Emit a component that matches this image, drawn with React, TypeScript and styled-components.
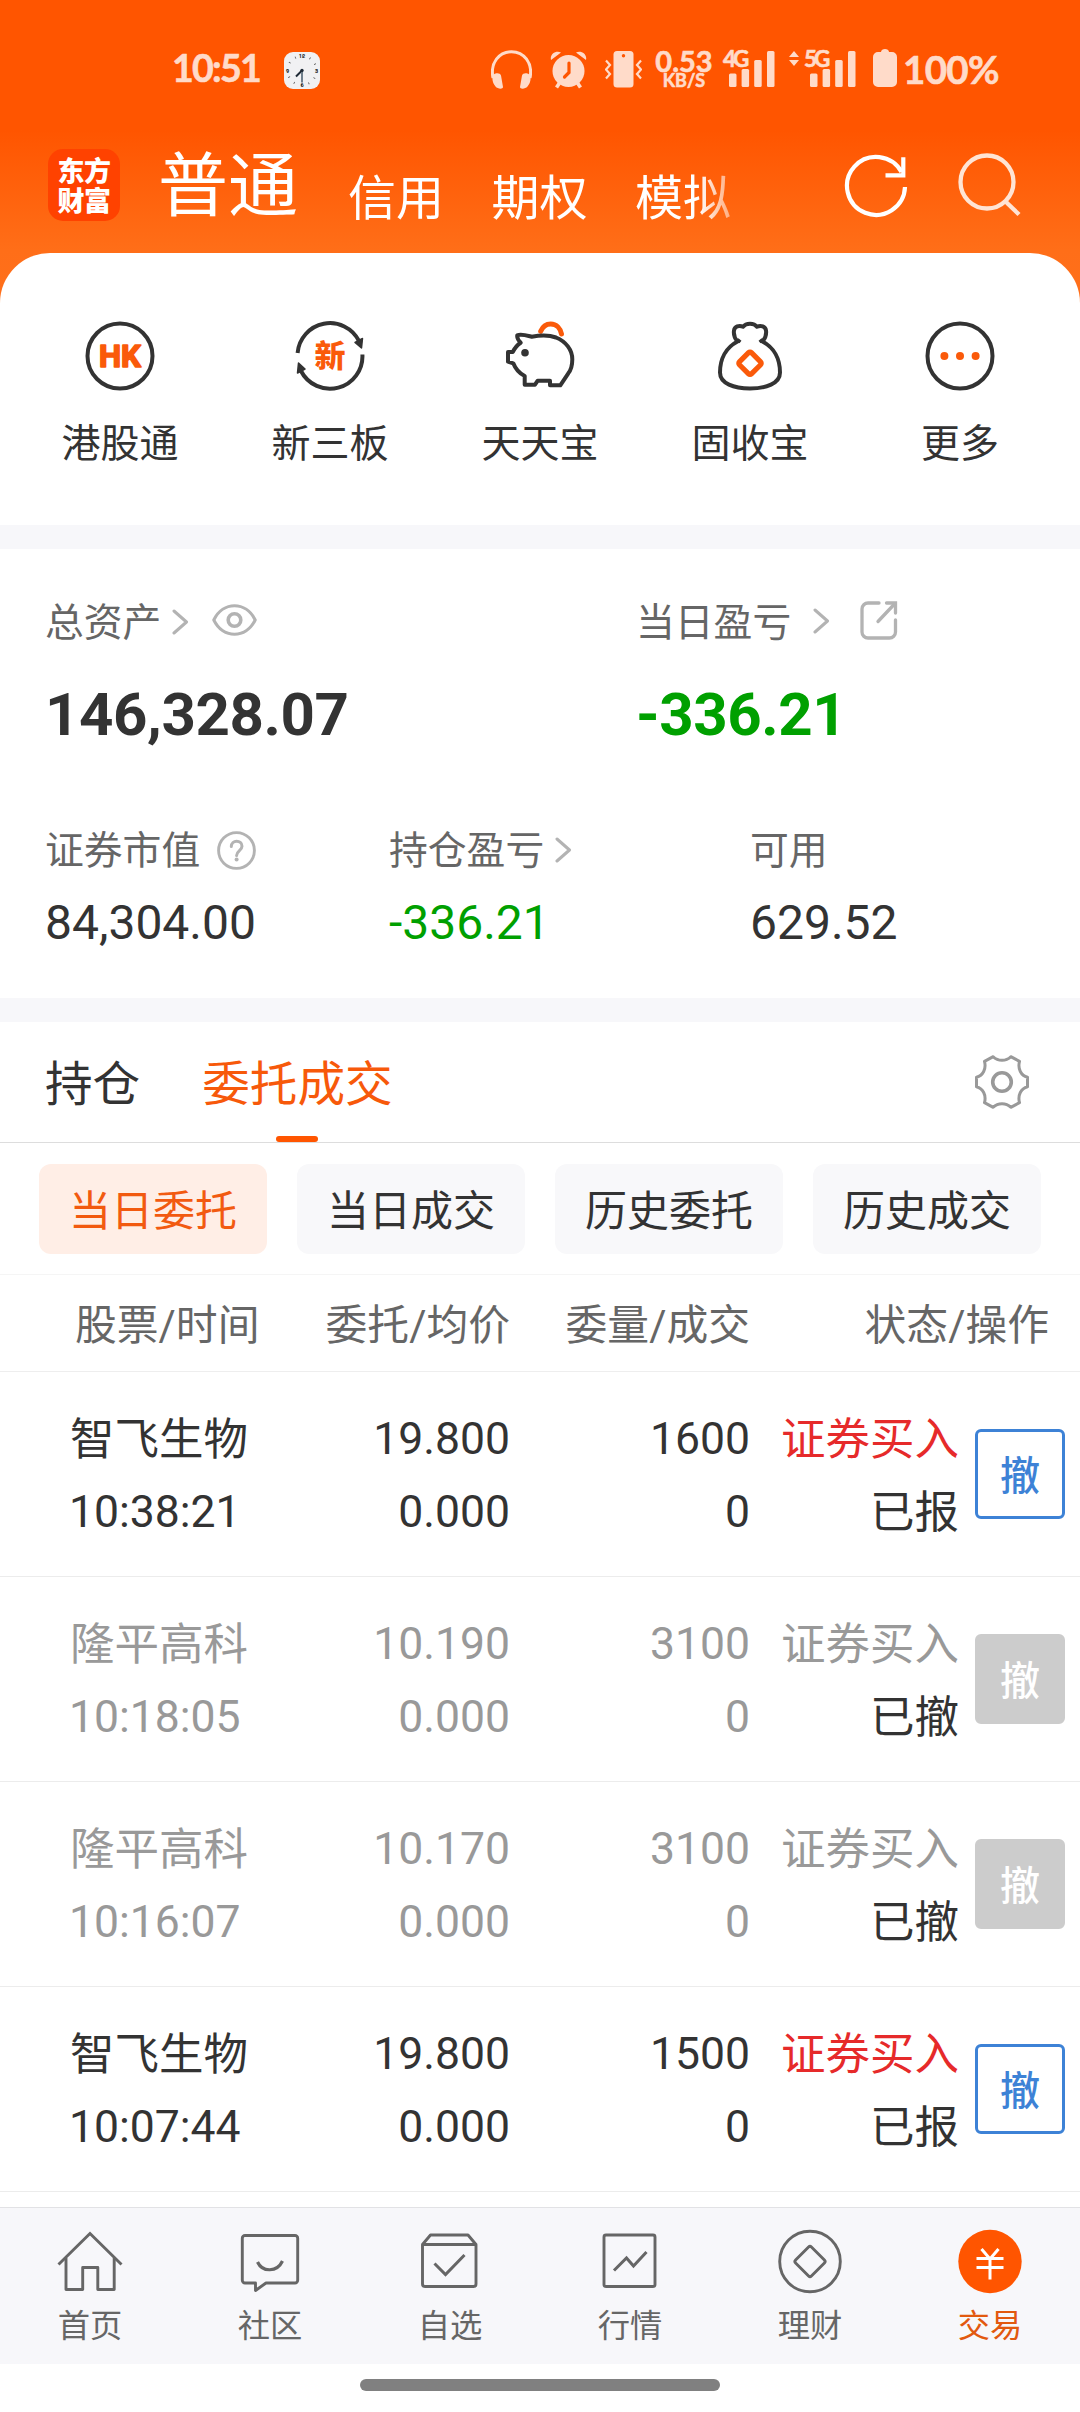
import React from 'react';
import styled, { createGlobalStyle, css } from 'styled-components';

const GlobalStyle = createGlobalStyle`
  *, *::before, *::after { box-sizing: border-box; }
  html, body { margin: 0; padding: 0; background: #fff; }
  body {
    width: 1080px;
    font-family: Roboto, 'Noto Sans CJK SC', sans-serif;
    color: #333;
    -webkit-font-smoothing: antialiased;
  }
  svg { display: block; flex: none; }
`;

const brand = '#ff5500';
const ink = '#333333';
const sub = '#666666';
const mute = '#999999';
const line = '#b3b3b3';
const green = '#00a000';
const strip = '#f7f7fa';
const status = '#ffdbc9';

const Screen = styled.div`
  width: 1080px;
  height: 2412px;
  overflow: hidden;
  display: flex;
  flex-direction: column;
  background: linear-gradient(#ff5500 0, #ff5500 130px, #ff6e18 250px, #ff701c 320px);
`;

/* ---------- status bar ---------- */

const StatusBar = styled.header`
  height: 136px;
  flex: none;
  display: flex;
  align-items: flex-start;
  padding: 48px 78px 0 172px;
  color: ${status};
  font-family: Lato, Roboto, sans-serif;
  font-weight: 700;
  -webkit-text-stroke: 0.6px ${status};
`;

const Clock = styled.span`
  width: 112px;
  font-size: 37.5px;
  line-height: 39px;
  letter-spacing: -1.7px;
  white-space: nowrap;
`;

const StatusIcons = styled.div`
  display: flex;
  align-items: flex-start;
  margin-left: auto;
`;

const Speed = styled.div`
  width: 60px;
  margin: 1px 9px 0 12px;
  display: flex;
  flex-direction: column;
  align-items: center;
  white-space: nowrap;
  b { font-size: 29px; font-weight: 700; line-height: 23px; }
  small { font-size: 18px; line-height: 17px; }
`;

const Signal = styled.div<{ $gap: number }>`
  display: flex;
  align-items: flex-start;
  margin-right: ${p => p.$gap}px;
`;

const Network = styled.span`
  width: 6px;
  overflow: visible;
  white-space: nowrap;
  font-size: 22.5px;
  line-height: 21px;
  letter-spacing: -3px;
`;

const Percent = styled.span`
  width: 99px;
  margin-left: 6px;
  font-size: 38.5px;
  line-height: 42px;
  letter-spacing: -0.7px;
  white-space: nowrap;
`;

/* ---------- title bar ---------- */

const TitleBar = styled.nav`
  height: 117px;
  flex: none;
  display: flex;
  align-items: flex-start;
  padding: 0 59px 0 48px;
  color: #fff;
`;

const Logo = styled.div`
  width: 72px;
  height: 72px;
  margin-top: 13px;
  border-radius: 15px;
  background: #ff4200;
  display: flex;
  flex-direction: column;
  align-items: center;
  justify-content: center;
  font-family: 'Noto Sans CJK SC', sans-serif;
  font-size: 27px;
  font-weight: 900;
  line-height: 30px;
  letter-spacing: -0.5px;
`;

const Accounts = styled.div`
  width: 615px;
  height: 117px;
  margin-left: 38px;
  display: flex;
  align-items: flex-start;
  white-space: nowrap;
  mask-image: linear-gradient(90deg, #000 540px, transparent 600px);
`;

const Account = styled.span<{ $active?: boolean }>`
  width: 96px;
  margin-right: 47.5px;
  font-size: 48px;
  line-height: 125px;
  ${p => p.$active && css`
    width: 140px;
    margin-right: 50px;
    font-size: 70px;
    line-height: 103px;
  `}
`;

const TitleActions = styled.div`
  margin-left: auto;
  margin-top: 16px;
  display: flex;
  gap: 49px;
`;

/* ---------- sheet ---------- */

const Sheet = styled.main`
  flex: 1;
  display: flex;
  flex-direction: column;
  background: #fff;
  border-radius: 50px 50px 0 0;
`;

const Shortcuts = styled.section`
  height: 272px;
  flex: none;
  display: grid;
  grid-template-columns: repeat(5, 210px);
  padding: 67px 15px 0;
`;

const Shortcut = styled.div`
  display: flex;
  flex-direction: column;
  align-items: center;
  font-size: 39px;
  line-height: 60px;
  gap: 22px;
`;

const Strip = styled.div`
  height: 24px;
  flex: none;
  background: ${strip};
`;

const Assets = styled.section`
  height: 449px;
  flex: none;
  padding: 49px 45px 0;
`;

const AssetRow = styled.div<{ $cols: string; $top?: number }>`
  display: grid;
  grid-template-columns: ${p => p.$cols};
  margin-top: ${p => p.$top ?? 0}px;
`;

const AssetLabel = styled.div`
  height: 48px;
  display: flex;
  align-items: center;
  color: ${sub};
  font-size: 38.8px;
  line-height: 48px;
  white-space: nowrap;
`;

const LabelText = styled.span`
  padding-top: 2px;
`;

const AssetIcon = styled.span<{ $left: number; $top?: number }>`
  margin-left: ${p => p.$left}px;
  margin-top: ${p => p.$top ?? 0}px;
`;

const AssetValue = styled.div<{ $big?: boolean; $loss?: boolean }>`
  color: ${p => (p.$loss ? green : ink)};
  font-size: 48px;
  line-height: 56px;
  margin-top: 21px;
  ${p => p.$big && css`
    font-size: 60px;
    font-weight: 700;
    line-height: 70px;
    margin-top: 34px;
    letter-spacing: -0.4px;
  `}
`;

/* ---------- orders ---------- */

const Tabs = styled.div`
  height: 121px;
  flex: none;
  display: flex;
  padding: 0 51px 0 45px;
  border-bottom: 1px solid #dddddd;
`;

const Tab = styled.div<{ $active?: boolean }>`
  margin-right: 62px;
  display: flex;
  flex-direction: column;
  align-items: center;
  font-size: 47.6px;
  line-height: 126px;
  height: 120px;
  color: ${p => (p.$active ? '#f7590a' : ink)};
  ${p => p.$active && css`
    &::after {
      content: '';
      width: 42px;
      height: 6px;
      margin-top: -12px;
      border-radius: 3px;
      background: ${brand};
    }
  `}
`;

const Settings = styled.span`
  margin: 33px 0 0 auto;
`;

const Filters = styled.div`
  height: 132px;
  flex: none;
  display: grid;
  grid-template-columns: repeat(4, 228px);
  gap: 30px;
  padding: 21px 39px 0;
  border-bottom: 1px solid #f5f5f5;
`;

const Filter = styled.button<{ $active?: boolean }>`
  height: 90px;
  border: 0;
  padding: 0 0 3px;
  border-radius: 12px;
  background: ${p => (p.$active ? '#ffeee6' : '#f8f8fa')};
  color: ${p => (p.$active ? '#f25a10' : ink)};
  font: inherit;
  font-size: 42px;
`;

const HeadRow = styled.div`
  height: 97px;
  flex: none;
  display: grid;
  grid-template-columns: 184px 251px 240px 299px;
  padding: 3px 31px 0 75px;
  border-bottom: 1px solid #eeeeee;
  color: ${sub};
  font-size: 41.8px;
  line-height: 96px;
  text-align: right;
  white-space: nowrap;
`;

const OrderRow = styled.div<{ $muted: boolean }>`
  height: 205px;
  flex: none;
  display: grid;
  grid-template-columns: 190px 251px 240px 209px 90px;
  padding: 0 15px 0 69px;
  align-items: center;
  border-bottom: 1px solid #ececec;
  color: ${p => (p.$muted ? mute : ink)};
`;

const Cell = styled.div<{ $left?: boolean }>`
  padding-top: 3px;
  display: flex;
  flex-direction: column;
  text-align: ${p => (p.$left ? 'left' : 'right')};
  font-size: 44.5px;
  line-height: 73px;
  white-space: nowrap;
`;

const StockName = styled.span`
  height: 73px;
  padding: 1px 0 0 1px;
`;

const Side = styled.span<{ $muted: boolean }>`
  height: 73px;
  padding-top: 1px;
  color: ${p => (p.$muted ? mute : '#e62a2a')};
`;

const State = styled.span`
  height: 73px;
  padding-top: 1px;
  color: ${ink};
`;

const Cancel = styled.button<{ $muted: boolean }>`
  width: 90px;
  height: 90px;
  margin-left: 16px;
  padding: 0 0 3px;
  border-radius: 6px;
  border: 3px solid ${p => (p.$muted ? '#cccccc' : '#3d82d6')};
  background: ${p => (p.$muted ? '#cccccc' : '#fff')};
  color: ${p => (p.$muted ? '#fff' : '#3d82d6')};
  font: inherit;
  font-weight: 500;
  font-size: 40px;
`;

/* ---------- bottom navigation ---------- */

const BottomNav = styled.nav`
  height: 157px;
  margin-top: 15px;
  flex: none;
  display: grid;
  grid-template-columns: repeat(6, 180px);
  border-top: 1px solid #e2e2e5;
  background: ${strip};
`;

const NavItem = styled.div<{ $active?: boolean }>`
  display: flex;
  flex-direction: column;
  align-items: center;
  padding-top: 21px;
  font-size: 32.3px;
  line-height: 40px;
  gap: 11px;
  color: ${p => (p.$active ? '#e2590f' : sub)};
`;

const HomeArea = styled.footer`
  height: 48px;
  flex: none;
  display: flex;
  justify-content: center;
  padding-top: 15px;
`;

const HomeBar = styled.div`
  width: 360px;
  height: 12px;
  border-radius: 6px;
  background: #808080;
`;

/* ---------- drawings ---------- */

const Drawing = styled.svg<{ $top?: number; $left?: number; $right?: number }>`
  margin: ${p => p.$top ?? 0}px ${p => p.$right ?? 0}px 0 ${p => p.$left ?? 0}px;
`;

const ClockFace = () => (
  <Drawing $top={4} width="36" height="37" viewBox="0 0 36 37" strokeWidth="0">
    <rect width="36" height="37" rx="9" fill="#f1f1f3" />
    <circle cx="18" cy="18.5" r="14.5" fill="none" stroke="#555" strokeWidth="2.2" strokeDasharray="0.8 6.79" />
    <g fill="#222" fontFamily="Roboto" fontSize="5.5" fontWeight="700" textAnchor="middle" style={{ WebkitTextStroke: '0' }}>
      <text x="18" y="6">12</text>
      <text x="32.5" y="20.5">3</text>
      <text x="18" y="35.3">6</text>
      <text x="3.6" y="20.5">9</text>
    </g>
    <path d="M18 18.5L12 24.5" stroke="#1f2a36" strokeWidth="2" />
    <path d="M18 18.5V30.5" stroke="#6f7f8c" strokeWidth="2" />
    <circle cx="18" cy="18.5" r="1.7" fill="#1f2a36" />
  </Drawing>
);

const Headphones = () => (
  <Drawing $top={2} width="41" height="40" viewBox="0 0 41 40">
    <path d="M2 28C-1 13 8 1.700 20.500 1.700S42 13 39 28" fill="none" stroke={status} strokeWidth="3" />
    <path d="M1.500 27c0-4 7.500-5 8.500-1.500L12 37c0 2.500-5.500 2-7.500-.5S1 31 1.500 27zM39.500 27c0-4-7.500-5-8.500-1.500L29 37c0 2.500 5.500 2 7.500-.5s3.500-5.500 3-9.500z" fill={status} />
  </Drawing>
);

const Alarm = () => (
  <Drawing $top={2} $left={18} width="37" height="40" viewBox="0 0 37 40">
    <circle cx="18.500" cy="21" r="16" fill={status} />
    <path d="M1 10C-.5 4 6 0 11 2.500zM36 10c1.500-6-5-10-10-7.500z" fill={status} />
    <path d="M9.500 33l-3 4.500M27.500 33l3 4.500" stroke={status} strokeWidth="3.600" />
    <path d="M19 13v9.500L14.500 27" fill="none" stroke={brand} strokeWidth="3.200" strokeLinecap="round" />
  </Drawing>
);

const Vibrate = () => (
  <Drawing $top={3} $left={18} width="37" height="38" viewBox="0 0 37 38">
    <rect x="8.500" y="0" width="20" height="36.500" rx="3.500" fill={status} />
    <circle cx="18.500" cy="4.800" r="1.700" fill={brand} />
    <path d="M1 9.500l4 4.500-4 4.500 4 4.500-4 4.500M36 9.500L32 14l4 4.500-4 4.500 4 4.500" fill="none" stroke={status} strokeWidth="2.200" />
  </Drawing>
);

const Bars = () => (
  <Drawing $top={3} width="46" height="37" viewBox="0 0 46 37" fill={status}>
    <rect x="0" y="22.500" width="7.500" height="13.500" rx="1.500" />
    <rect x="12.600" y="18" width="7.500" height="18" rx="1.500" />
    <rect x="25.200" y="9" width="7.500" height="27" rx="1.500" />
    <rect x="38" y="0" width="7.500" height="36" rx="1.500" />
  </Drawing>
);

const DataArrows = () => (
  <Drawing $top={3} $right={5} width="10" height="15" viewBox="0 0 10 15" fill={status}>
    <path d="M5 0l5 6H0zM5 15l5-6H0z" />
  </Drawing>
);

const Battery = () => (
  <Drawing $top={1} width="24" height="38" viewBox="0 0 24 38" fill={status}>
    <path d="M8 3c0-4 8-4 8 0h3a5 5 0 015 5v25a5 5 0 01-5 5H5a5 5 0 01-5-5V8a5 5 0 015-5z" />
  </Drawing>
);

const Refresh = () => (
  <Drawing $top={2} width="64" height="66" viewBox="0 0 64 66" fill="none" stroke="#fff" strokeWidth="4.200">
    <path d="M57.500 18A29 29 0 1 0 61 33" />
    <path d="M59.300 3.200V21.300H41.500" />
  </Drawing>
);

const Search = () => (
  <Drawing width="64" height="66" viewBox="0 0 64 66" fill="none" stroke="#ffe4d4" strokeWidth="4.300">
    <circle cx="30" cy="30" r="26.500" />
    <path d="M48.500 49.500L62 62.500" />
  </Drawing>
);

const HkIcon = () => (
  <svg width="72" height="72" viewBox="0 0 72 72" fill="none">
    <circle cx="36" cy="36" r="32.500" stroke={ink} strokeWidth="4" />
    <text x="36" y="47" fontSize="31" fontWeight="700" fill="#fa5a0a" stroke="#fa5a0a" strokeWidth="1.600" strokeLinejoin="round" textAnchor="middle" textLength="42" lengthAdjust="spacingAndGlyphs" fontFamily="Roboto">HK</text>
  </svg>
);

const NewBoardIcon = () => (
  <svg width="72" height="72" viewBox="0 0 72 72" fill="none">
    <path d="M3.600 33A32.500 32.500 0 0 1 65 21M68.400 34.500A32.500 32.500 0 0 1 7 51" stroke={ink} strokeWidth="4" />
    <path d="M61 22.500L68.500 18.500 67.500 28zM11 49L3.500 53 4.500 43z" fill={ink} stroke={ink} strokeWidth="1.500" strokeLinejoin="round" />
    <text x="36" y="47.300" fontSize="31" fontWeight="900" fill="#fa5a0a" textAnchor="middle" fontFamily="Noto Sans CJK SC">新</text>
  </svg>
);

const PiggyIcon = () => (
  <svg width="72" height="72" viewBox="0 0 72 72" fill="none">
    <path d="M36.700 11.300C38.500 7 42 4 46.700 4 52.500 4 56.500 8.500 57.500 14" stroke="#fa5a0a" strokeWidth="5" strokeLinecap="round" />
    <path d="M13.300 15.300C17 13.500 23 15.500 27.700 16.700C36 15.300 46 15.300 52 17.500C62 21.500 68.300 30 68.300 39.300C68.300 46 67 50 64.300 53.300L56.300 65.300H46V60.700H33.700L31 64.700H20.700V56C14.500 53 11.500 49 9.300 43.300L4 41.700V32H8.700C10.500 28.500 13 25 16.700 22.700C14.500 20.500 12.800 17.500 13.300 15.300Z" stroke={ink} strokeWidth="4" strokeLinejoin="round" />
    <circle cx="21" cy="32.700" r="3.800" fill={ink} />
  </svg>
);

const BagIcon = () => (
  <svg width="72" height="72" viewBox="0 0 72 72" fill="none">
    <path d="M23.500 21.500C20.500 18 19.500 14 20 10.500C20.500 6.500 25 5 29 6.700C32 2.700 40 2.700 43 6.700C47 5 51.500 6.500 52 10.500C52.500 14 51.500 18 48.500 21.500C60 27.500 66 39 66 52.500C66 63.500 52 68.500 36 68.500S6 63.500 6 52.500C6 39 12 27.500 23.500 21.500Z" stroke={ink} strokeWidth="4" strokeLinejoin="round" />
    <path d="M23.500 19.500l3 2.500M48.500 19.500l-3 2.500" stroke={ink} strokeWidth="3" />
    <rect x="27.500" y="34.800" width="17" height="17" rx="2" transform="rotate(45 36 43.300)" stroke="#fa5a0a" strokeWidth="5.200" />
  </svg>
);

const MoreIcon = () => (
  <svg width="72" height="72" viewBox="0 0 72 72" fill="none">
    <circle cx="36" cy="36" r="32.500" stroke={ink} strokeWidth="4" />
    <g fill="#fa5a0a">
      <circle cx="20.400" cy="36" r="4" />
      <circle cx="36" cy="36" r="4" />
      <circle cx="51.600" cy="36" r="4" />
    </g>
  </svg>
);

const Chevron = () => (
  <svg width="17" height="26" viewBox="0 0 17 26" fill="none" stroke={line} strokeWidth="3" strokeLinecap="round" strokeLinejoin="round">
    <path d="M2 2l12.500 11L2 24" />
  </svg>
);

const Eye = () => (
  <svg width="45" height="32" viewBox="0 0 45 32" fill="none" stroke={line} strokeWidth="3.100">
    <path d="M1.800 16C11-3 34-3 43.200 16 34 35 11 35 1.800 16z" strokeLinejoin="round" />
    <circle cx="22.500" cy="16" r="6.300" strokeWidth="3.600" />
  </svg>
);

const Share = () => (
  <svg width="38" height="39" viewBox="0 0 38 39" fill="none" stroke={line} strokeWidth="3.300">
    <path d="M19 2H8a6 6 0 00-6 6v23a6 6 0 006 6h21.500a6 6 0 006-6V19M26.500 2h9v10" strokeLinecap="round" />
    <path d="M34.500 3L18 20.500" strokeLinecap="round" />
  </svg>
);

const Help = () => (
  <svg width="39" height="39" viewBox="0 0 39 39" fill="none" stroke={line} strokeWidth="2.900">
    <circle cx="19.500" cy="19.500" r="17.900" />
    <path d="M14.300 15.500C14.300 8.500 25 8.500 25 15.200c0 4.300-5.400 4.400-5.400 9.300" strokeLinecap="round" strokeWidth="3" />
    <circle cx="19.600" cy="28.400" r="2" fill={line} stroke="none" />
  </svg>
);

const Gear = () => (
  <svg width="54" height="54" viewBox="0 0 54 54" fill="none" stroke={mute} strokeWidth="3">
    <path d="M18.200 1.700C23 6.500 31 6.500 35.800 1.700L44.500 6.300C42.500 14 46 20.500 52.500 22.300V31.700C46 33.500 42.500 40 44.500 47.700L35.800 52.300C31 47.500 23 47.500 18.200 52.300L9.500 47.700C11.500 40 8 33.500 1.500 31.700V22.300C8 20.500 11.500 14 9.500 6.300Z" strokeLinejoin="round" />
    <circle cx="27" cy="27" r="9.300" strokeWidth="3.600" />
  </svg>
);

const navStroke = { fill: 'none', stroke: sub, strokeWidth: 2.9 } as const;

const HomeIcon = () => (
  <svg width="66" height="66" viewBox="0 0 66 66" {...navStroke}>
    <path d="M1.500 35.500L33 4.500 64.500 35.500" />
    <path d="M9 29v31.500H25.700V38.500H40.800V60.500H57.200V29" strokeLinejoin="round" />
  </svg>
);

const CommunityIcon = () => (
  <svg width="66" height="66" viewBox="0 0 66 66" {...navStroke}>
    <path d="M8 6.500H58a2.700 2.700 0 012.700 2.700V51.300a2.700 2.700 0 01-2.700 2.700H29L18.500 61.500V54H8a2.700 2.700 0 01-2.700-2.700V9.200A2.700 2.700 0 018 6.500z" strokeLinejoin="round" />
    <path d="M20.500 33C25.500 43.500 40 43.500 45.500 32" strokeWidth="3.200" />
  </svg>
);

const WatchlistIcon = () => (
  <svg width="66" height="66" viewBox="0 0 66 66" {...navStroke}>
    <path d="M5.500 15.500H59V55a2.500 2.500 0 01-2.500 2.500H8A2.500 2.500 0 015.500 55zM5.500 15.500L13.500 6H51l8 9.500" strokeLinejoin="round" />
    <path d="M17.500 34.500L28.500 45.500 47.500 26" strokeWidth="3" />
  </svg>
);

const QuotesIcon = () => (
  <svg width="66" height="66" viewBox="0 0 66 66" {...navStroke}>
    <rect x="7" y="6" width="51" height="51.500" rx="2" />
    <path d="M17 41.500L29.500 29 36.500 37 49.500 23" strokeWidth="3" />
  </svg>
);

const WealthIcon = () => (
  <svg width="66" height="66" viewBox="0 0 66 66" {...navStroke}>
    <circle cx="33" cy="32.500" r="30.300" />
    <rect x="21.800" y="21.300" width="22.400" height="22.400" rx="2" transform="rotate(45 33 32.500)" />
  </svg>
);

const TradeIcon = () => (
  <svg width="66" height="66" viewBox="0 0 66 66">
    <circle cx="33" cy="32.500" r="31.700" fill={brand} />
    <path d="M24.500 20L33 30 41.500 20M19.500 29.500H46.500M19.500 38.500H46.500M33 30V50.500" fill="none" stroke="#fff" strokeWidth="3" />
  </svg>
);

/* ---------- data ---------- */

const shortcuts = [
  { label: '港股通', Icon: HkIcon },
  { label: '新三板', Icon: NewBoardIcon },
  { label: '天天宝', Icon: PiggyIcon },
  { label: '固收宝', Icon: BagIcon },
  { label: '更多', Icon: MoreIcon },
];

const orders = [
  { name: '智飞生物', time: '10:38:21', price: '19.800', qty: '1600', state: '已报', muted: false },
  { name: '隆平高科', time: '10:18:05', price: '10.190', qty: '3100', state: '已撤', muted: true },
  { name: '隆平高科', time: '10:16:07', price: '10.170', qty: '3100', state: '已撤', muted: true },
  { name: '智飞生物', time: '10:07:44', price: '19.800', qty: '1500', state: '已报', muted: false },
];

const navItems = [
  { label: '首页', Icon: HomeIcon },
  { label: '社区', Icon: CommunityIcon },
  { label: '自选', Icon: WatchlistIcon },
  { label: '行情', Icon: QuotesIcon },
  { label: '理财', Icon: WealthIcon },
  { label: '交易', Icon: TradeIcon, active: true },
];

export default function App() {
  return (
    <>
      <GlobalStyle />
      <Screen>
        <StatusBar>
          <Clock>10:51</Clock>
          <ClockFace />
          <StatusIcons>
            <Headphones />
            <Alarm />
            <Vibrate />
            <Speed>
              <b>0.53</b>
              <small>KB/S</small>
            </Speed>
            <Signal $gap={14}>
              <Network>4G</Network>
              <Bars />
            </Signal>
            <Signal $gap={17}>
              <DataArrows />
              <Network>5G</Network>
              <Bars />
            </Signal>
            <Battery />
            <Percent>100%</Percent>
          </StatusIcons>
        </StatusBar>

        <TitleBar>
          <Logo>
            <span>东方</span>
            <span>财富</span>
          </Logo>
          <Accounts>
            <Account $active>普通</Account>
            <Account>信用</Account>
            <Account>期权</Account>
            <Account>模拟</Account>
          </Accounts>
          <TitleActions>
            <Refresh />
            <Search />
          </TitleActions>
        </TitleBar>

        <Sheet>
          <Shortcuts>
            {shortcuts.map(({ label, Icon }) => (
              <Shortcut key={label}>
                <Icon />
                <span>{label}</span>
              </Shortcut>
            ))}
          </Shortcuts>
          <Strip />
          <Assets>
            <AssetRow $cols="591px 1fr">
              <div>
                <AssetLabel>
                  <LabelText>总资产</LabelText>
                  <AssetIcon $left={11}><Chevron /></AssetIcon>
                  <AssetIcon $left={23} $top={-5}><Eye /></AssetIcon>
                </AssetLabel>
                <AssetValue $big>146,328.07</AssetValue>
              </div>
              <div>
                <AssetLabel>
                  <LabelText>当日盈亏</LabelText>
                  <AssetIcon $left={22} $top={-3}><Chevron /></AssetIcon>
                  <AssetIcon $left={30} $top={-3}><Share /></AssetIcon>
                </AssetLabel>
                <AssetValue $big $loss>-336.21</AssetValue>
              </div>
            </AssetRow>
            <AssetRow $cols="344px 361px 1fr" $top={76}>
              <div>
                <AssetLabel>
                  <LabelText>证券市值</LabelText>
                  <AssetIcon $left={17}><Help /></AssetIcon>
                </AssetLabel>
                <AssetValue>84,304.00</AssetValue>
              </div>
              <div>
                <AssetLabel>
                  <LabelText>持仓盈亏</LabelText>
                  <AssetIcon $left={11}><Chevron /></AssetIcon>
                </AssetLabel>
                <AssetValue $loss>-336.21</AssetValue>
              </div>
              <div>
                <AssetLabel><LabelText>可用</LabelText></AssetLabel>
                <AssetValue>629.52</AssetValue>
              </div>
            </AssetRow>
          </Assets>
          <Strip />

          <Tabs>
            <Tab>持仓</Tab>
            <Tab $active>委托成交</Tab>
            <Settings><Gear /></Settings>
          </Tabs>
          <Filters>
            <Filter $active>当日委托</Filter>
            <Filter>当日成交</Filter>
            <Filter>历史委托</Filter>
            <Filter>历史成交</Filter>
          </Filters>
          <HeadRow>
            <span>股票/时间</span>
            <span>委托/均价</span>
            <span>委量/成交</span>
            <span>状态/操作</span>
          </HeadRow>
          {orders.map(o => (
            <OrderRow key={o.time} $muted={o.muted}>
              <Cell $left>
                <StockName>{o.name}</StockName>
                <span>{o.time}</span>
              </Cell>
              <Cell>
                <span>{o.price}</span>
                <span>0.000</span>
              </Cell>
              <Cell>
                <span>{o.qty}</span>
                <span>0</span>
              </Cell>
              <Cell>
                <Side $muted={o.muted}>证券买入</Side>
                <State>{o.state}</State>
              </Cell>
              <Cancel $muted={o.muted}>撤</Cancel>
            </OrderRow>
          ))}

          <BottomNav>
            {navItems.map(({ label, Icon, active }) => (
              <NavItem key={label} $active={active}>
                <Icon />
                <span>{label}</span>
              </NavItem>
            ))}
          </BottomNav>
          <HomeArea>
            <HomeBar />
          </HomeArea>
        </Sheet>
      </Screen>
    </>
  );
}
